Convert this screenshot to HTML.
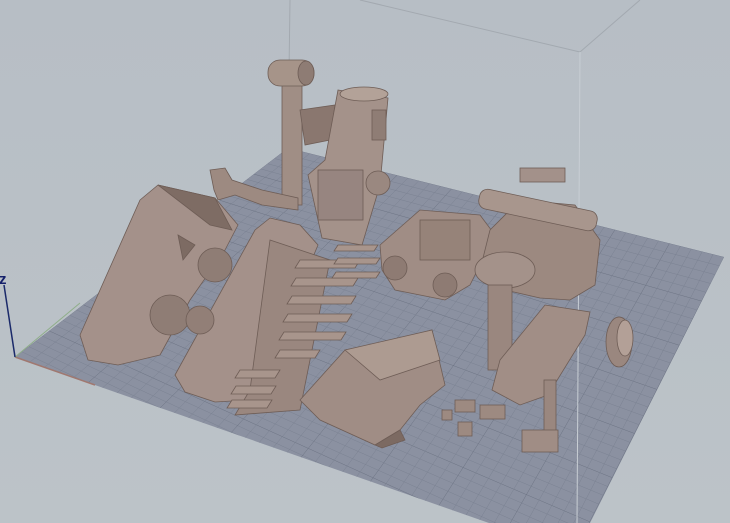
<!DOCTYPE html>
<html><head><meta charset="utf-8"><style>
html,body{margin:0;padding:0;width:730px;height:523px;overflow:hidden;background:#b9c0c6}
svg{display:block;position:absolute;left:0;top:0}
</style></head><body>
<svg id="s" width="730" height="523" viewBox="0 0 730 523" xmlns="http://www.w3.org/2000/svg">
<defs>
<linearGradient id="bg" x1="0" y1="0" x2="0" y2="1"><stop offset="0" stop-color="#b7bec5"/><stop offset="1" stop-color="#bcc3c8"/></linearGradient>
<clipPath id="pc"><polygon points="15,357 288,148 724,257 590,523 489,523"/></clipPath>
</defs>
<rect width="730" height="523" fill="url(#bg)"/>
<polygon points="15,357 288,148 724,257 590,523 489,523" fill="#8b91a1"/>
<g id="grid" clip-path="url(#pc)" stroke="#7b8292" stroke-width="0.5" fill="none"></g>
<g stroke="#a3a9b0" stroke-width="1" fill="none">
<line x1="290" y1="0" x2="288" y2="148"/>
<line x1="360" y1="0" x2="580" y2="52"/>
<line x1="580" y1="52" x2="640" y2="0"/>
<line x1="580" y1="52" x2="577" y2="523" stroke="#c8ced4"/>
</g>
<line x1="15" y1="357" x2="95" y2="385" stroke="#a07870" stroke-width="1.5"/>
<line x1="15" y1="357" x2="80" y2="303" stroke="#8fae8a" stroke-width="1"/>
<line x1="15" y1="357" x2="4" y2="285" stroke="#1b2a6a" stroke-width="1.5"/>
<text x="-1" y="284" font-family="Liberation Sans,sans-serif" font-size="15" font-weight="bold" fill="#15206a">z</text>

<g stroke="#6e5d56" stroke-width="0.8">
<rect x="282" y="85" width="20" height="120" fill="#a08e85"/>
<rect x="268" y="60" width="46" height="26" rx="12" fill="#a69489"/>
<ellipse cx="306" cy="73" rx="8" ry="12" fill="#8e7c74"/>
<path d="M300 110 L335 105 L330 140 L305 145Z" fill="#8a776f"/>
<path d="M210 170 L225 168 L232 180 L262 190 L298 198 L298 210 L262 205 L235 195 L218 200 L214 190 Z" fill="#9d8a81"/>
<path d="M338 90 L388 98 L380 185 L362 245 L322 238 L308 175 L325 160Z" fill="#a4928a"/>
<ellipse cx="364" cy="94" rx="24" ry="7" fill="#b3a298"/>
<rect x="372" y="110" width="14" height="30" fill="#8f7d75"/>
<circle cx="378" cy="183" r="12" fill="#9a8880"/>
<rect x="318" y="170" width="45" height="50" fill="#978580"/>
<path d="M80 335 L140 200 L158 185 L215 198 L238 225 L225 250 L190 300 L160 355 L118 365 L88 360Z" fill="#a4918a" stroke-linejoin="round"/>
<path d="M158 185 L215 198 L232 230 L210 225Z" fill="#7e6c64"/>
<polygon points="178,235 195,245 183,260" fill="#7d6b63"/>
<circle cx="170" cy="315" r="20" fill="#8f7d75"/>
<circle cx="215" cy="265" r="17" fill="#8f7d75"/>
<path d="M175 375 L255 230 L270 218 L300 225 L318 245 L295 300 L270 360 L250 400 L215 402 L185 392Z" fill="#a4918a"/>
<circle cx="200" cy="320" r="14" fill="#927f77"/>
<path d="M270 240 L330 260 L300 410 L235 415 L250 390Z" fill="#9a877f"/>
</g>
<g stroke="#6e5d56" stroke-width="0.8" fill="#a8958c">
<path d="M300 260 h60 l-5 8 h-60z"/><path d="M296 278 h62 l-5 8 h-62z"/><path d="M292 296 h64 l-5 8 h-64z"/>
<path d="M288 314 h64 l-5 8 h-64z"/><path d="M284 332 h62 l-5 8 h-62z"/><path d="M280 350 h40 l-5 8 h-40z"/>
<path d="M338 245 h40 l-4 6 h-40z"/><path d="M338 258 h42 l-4 6 h-42z"/><path d="M336 272 h44 l-4 6 h-44z"/>
<path d="M240 370 h40 l-5 8 h-40z"/><path d="M236 386 h40 l-5 8 h-40z"/><path d="M232 400 h40 l-5 8 h-40z"/>
</g>
<g stroke="#6e5d56" stroke-width="0.8">
<path d="M380 245 L420 210 L480 215 L495 235 L470 285 L445 300 L395 290 L382 270Z" fill="#a08d85"/>
<circle cx="395" cy="268" r="12" fill="#8e7b73"/><circle cx="445" cy="285" r="12" fill="#8e7b73"/>
<rect x="420" y="220" width="50" height="40" fill="#968379"/>
<path d="M490 230 L520 200 L575 205 L600 240 L595 285 L570 300 L540 298 L505 290 L480 270Z" fill="#9c8980"/>
<rect x="478" y="200" width="120" height="20" rx="8" fill="#a8968d" transform="rotate(12 538 210)"/>
<rect x="520" y="168" width="45" height="14" fill="#a3918a"/>
<ellipse cx="505" cy="270" rx="30" ry="18" fill="#a4928a"/>
<rect x="488" y="285" width="24" height="85" fill="#9a877f"/>
<path d="M500 360 L545 305 L590 312 L585 335 L548 395 L520 405 L492 390Z" fill="#a18e86"/>
<rect x="544" y="380" width="12" height="65" fill="#9a877f"/>
<rect x="522" y="430" width="36" height="22" fill="#a08d85"/>
<ellipse cx="619" cy="342" rx="13" ry="25" fill="#9a877f"/>
<ellipse cx="625" cy="338" rx="8" ry="18" fill="#b3a097"/>
<path d="M300 400 L345 350 L395 340 L432 330 L445 385 L420 405 L400 430 L375 445 L320 420Z" fill="#a08d85"/>
<path d="M345 350 L432 330 L440 360 L380 380Z" fill="#ad9b91"/>
<path d="M375 445 L400 430 L405 440 L382 448Z" fill="#7c6a62"/>
<rect x="455" y="400" width="20" height="12" fill="#9d8a81"/>
<rect x="480" y="405" width="25" height="14" fill="#9d8a81"/>
<rect x="458" y="422" width="14" height="14" fill="#9d8a81"/>
<rect x="442" y="410" width="10" height="10" fill="#9d8a81"/>
</g>
<script>
(function(){
var g=document.getElementById('grid'),ns='http://www.w3.org/2000/svg';
var A=[15,357],B=[288,148],C=[724,257],Dp=[545,610];
function L(p,q,t){return [p[0]+(q[0]-p[0])*t,p[1]+(q[1]-p[1])*t];}
var n=40;
for(var i=0;i<=n;i++){var t=i/n;
 var p1=L(A,B,t),p2=L(Dp,C,t);
 var l=document.createElementNS(ns,'line');l.setAttribute('x1',p1[0]);l.setAttribute('y1',p1[1]);l.setAttribute('x2',p2[0]);l.setAttribute('y2',p2[1]);
 if(i%5==0)l.setAttribute('stroke','#6c7383');g.appendChild(l);
 var q1=L(A,Dp,t),q2=L(B,C,t);
 var m=document.createElementNS(ns,'line');m.setAttribute('x1',q1[0]);m.setAttribute('y1',q1[1]);m.setAttribute('x2',q2[0]);m.setAttribute('y2',q2[1]);
 if(i%5==0)m.setAttribute('stroke','#6c7383');g.appendChild(m);}
})();
</script>
</svg>
</body></html>
